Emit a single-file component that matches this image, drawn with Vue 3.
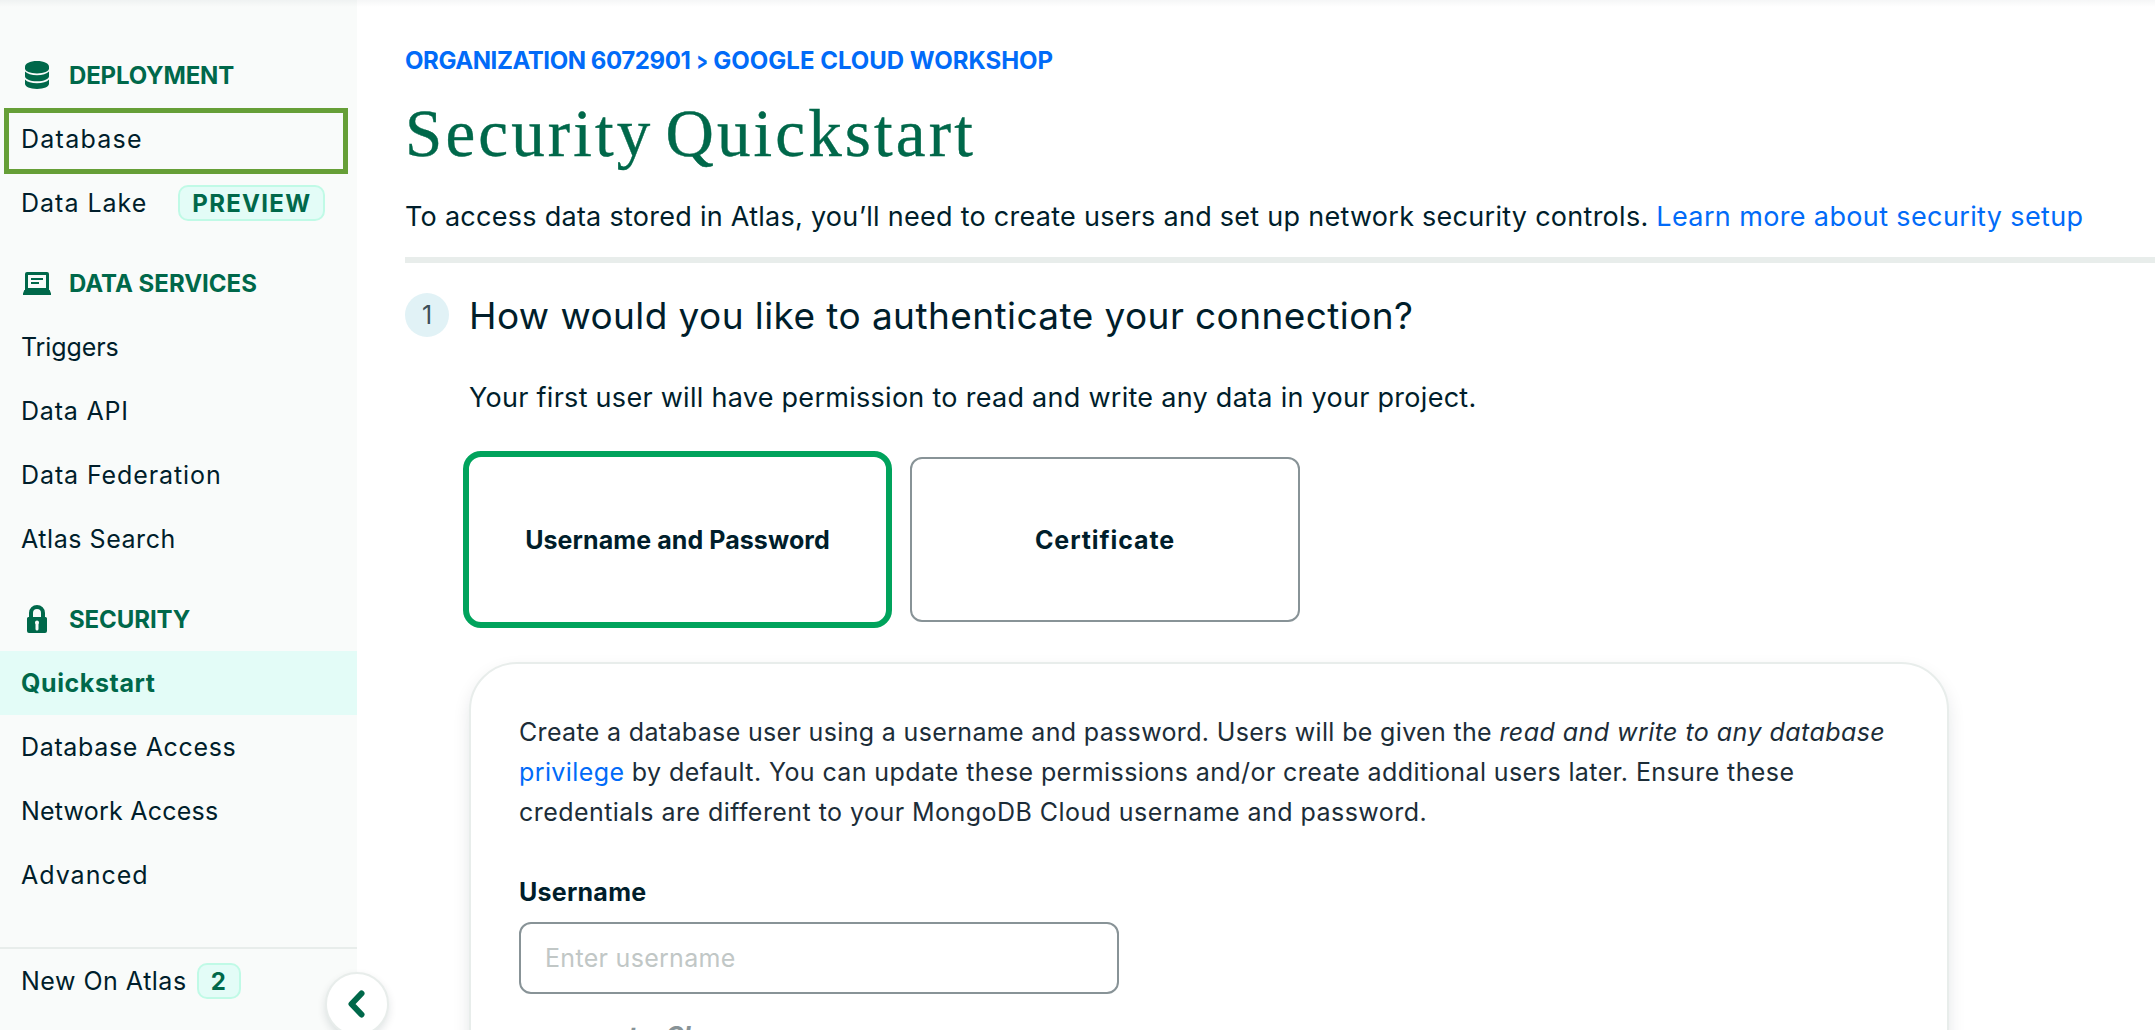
<script setup>
const deployment = [
  { label: 'Database', tracking: 1.25 },
  { label: 'Data Lake', tracking: 1.0, badge: 'PREVIEW' },
]
const services = [
  { label: 'Triggers', tracking: -0.1 },
  { label: 'Data API', tracking: 0.8 },
  { label: 'Data Federation', tracking: 0.9 },
  { label: 'Atlas Search', tracking: 0.55 },
]
const security = [
  { label: 'Quickstart', tracking: 0.6, active: true },
  { label: 'Database Access', tracking: 0.65 },
  { label: 'Network Access', tracking: 0.22 },
  { label: 'Advanced', tracking: 1.0 },
]
</script>

<template>
  <div class="page">
    <nav class="sidebar">
      <section class="group">
        <h2 class="group-title">
          <svg class="icon" width="32" height="32" viewBox="0 0 32 32">
            <path d="M4 7.500C4 4.600 8.800 2 16 2s12 2.600 12 5.500v2C28 12.200 23 14.400 16 14.400S4 12.200 4 9.500z" />
            <path d="M4 12.600c2.200 2.500 6.600 3.600 12 3.600s9.800-1.100 12-3.600v4.700c0 2.900-5 5-12 5s-12-2.100-12-5z" />
            <path d="M4 20.600c2.200 2.600 6.600 3.700 12 3.700s9.800-1.100 12-3.700v4.200c0 3-5 5.200-12 5.200S4 27.800 4 24.800z" />
          </svg>
          <span class="t-deploy">DEPLOYMENT</span>
        </h2>
        <a v-for="item in deployment" :key="item.label" class="item">
          <span :style="{ letterSpacing: item.tracking + 'px' }">{{ item.label }}</span>
          <span v-if="item.badge" class="badge preview">{{ item.badge }}</span>
        </a>
      </section>
      <section class="group">
        <h2 class="group-title">
          <svg class="icon" width="32" height="32" viewBox="0 0 32 32">
            <path fill-rule="evenodd" d="M4 7a2 2 0 0 1 2-2h20a2 2 0 0 1 2 2v16h.7l1.300 3.500V28H2v-1.500L3.300 23H4zM7 8v13h18V8z" />
            <path d="M10 11h12v2H10zM10 15h8v2h-8z" />
          </svg>
          <span>DATA SERVICES</span>
        </h2>
        <a v-for="item in services" :key="item.label" class="item">
          <span :style="{ letterSpacing: item.tracking + 'px' }">{{ item.label }}</span>
        </a>
      </section>
      <section class="group">
        <h2 class="group-title">
          <svg class="icon" width="32" height="32" viewBox="0 0 32 32">
            <path fill-rule="evenodd" d="M8 14v-4a8 8 0 0 1 16 0v4h.500A1.500 1.500 0 0 1 26 15.500V28a2 2 0 0 1-2 2H8a2 2 0 0 1-2-2V15.500A1.500 1.500 0 0 1 7.500 14zM12 14h8v-4a4 4 0 0 0-8 0zM14 19.500c0 1 .5 1.500.5 2V26a1.500 1.500 0 0 0 3 0v-4.500c0-.5.5-1 .5-2a2 2 0 0 0-4 0z" />
          </svg>
          <span class="t-sec">SECURITY</span>
        </h2>
        <a v-for="item in security" :key="item.label" class="item" :class="{ active: item.active }">
          <span :style="{ letterSpacing: item.tracking + 'px' }">{{ item.label }}</span>
        </a>
      </section>
      <footer class="news">
        <span>New On Atlas</span>
        <span class="badge count">2</span>
      </footer>
      <div class="highlight"></div>
      <button class="collapse" aria-label="Collapse">
        <svg width="32" height="32" viewBox="0 0 32 32"><path d="M20.500 5.500 10.500 16l10 10.500" /></svg>
      </button>
    </nav>

    <main class="main">
      <div class="crumbs">
        <span class="org">ORGANIZATION 6072901</span>
        <span class="sep">&gt;</span>
        <span>GOOGLE CLOUD WORKSHOP</span>
      </div>
      <h1>Security Quickstart</h1>
      <p class="intro"><span>To access data stored in Atlas, you’ll need to create users and set up network security controls.</span> <a>Learn more about security setup</a></p>
      <hr />
      <div class="step">
        <span class="num">1</span>
        <h3>How would you like to authenticate your connection?</h3>
      </div>
      <div class="body">
        <p class="lead">Your first user will have permission to read and write any data in your project.</p>
        <div class="cards">
          <div class="card selected">Username and Password</div>
          <div class="card cert">Certificate</div>
        </div>
        <div class="panel">
          <p class="desc">
            <span class="l1">Create a database user using a username and password. Users will be given the <em>read and write to any database</em></span><br />
            <span class="l2"><a>privilege</a> by default. You can update these permissions and/or create additional users later. Ensure these</span><br />
            <span>credentials are different to your MongoDB Cloud username and password.</span>
          </p>
          <label for="user">Username</label>
          <input id="user" type="text" placeholder="Enter username" />
          <div class="hint"><span>t</span><span>Cl</span></div>
        </div>
      </div>
    </main>
    <div class="top-shade"></div>
  </div>
</template>

<style>
body { margin: 0; overflow: hidden; }
</style>

<style scoped>
.page {
  position: relative;
  display: flex;
  width: 2155px;
  height: 1030px;
  overflow: hidden;
  background: #fff;
  color: #001e2b;
  font-family: Inter, "Liberation Sans", sans-serif;
  font-size: 25px;
  white-space: nowrap;
}
h1, h2, h3, p { margin: 0; font-weight: 400; }
a { color: #016bf8; }
.top-shade {
  position: absolute;
  z-index: 2;
  inset: 0 0 auto 0;
  height: 7px;
  background: linear-gradient(rgba(0, 30, 43, 0.04), rgba(0, 30, 43, 0));
}

.sidebar {
  position: relative;
  z-index: 1;
  display: flex;
  flex: 0 0 357px;
  flex-direction: column;
  box-sizing: border-box;
  padding-top: 43px;
  background: #f9fbfa;
}
.group { margin-bottom: 16px; }
.group-title {
  display: flex;
  align-items: center;
  height: 64px;
  padding-left: 21px;
  color: #00684a;
  font-size: 24px;
  font-weight: 700;
}
.icon { margin-right: 16px; fill: currentColor; }
.t-deploy { letter-spacing: -0.15px; }
.t-sec { letter-spacing: -0.1px; }
.item {
  display: flex;
  align-items: center;
  height: 64px;
  padding-left: 21px;
  color: #001e2b;
}
.item.active { background: #e3fcf7; color: #00684a; font-weight: 700; }
.badge {
  display: flex;
  align-items: center;
  justify-content: center;
  box-sizing: border-box;
  height: 36px;
  border: 2px solid #c0fae6;
  border-radius: 10px;
  background: #e3fcf7;
  color: #00684a;
  font-size: 24px;
  font-weight: 700;
}
.preview { width: 147px; margin-left: 31px; letter-spacing: 1.3px; }
.count { width: 44px; margin-left: 10px; }
.news {
  display: flex;
  align-items: center;
  height: 64px;
  margin-top: 24px;
  padding-left: 21px;
  border-top: 2px solid #e8edeb;
  letter-spacing: 0.5px;
}
.highlight {
  position: absolute;
  top: 108px;
  left: 4px;
  width: 334px;
  height: 56px;
  border: 5px solid #669f37;
}
.collapse {
  position: absolute;
  top: 972px;
  left: 325px;
  display: flex;
  align-items: center;
  justify-content: center;
  width: 64px;
  height: 64px;
  padding: 0;
  border: 2px solid #e8edeb;
  border-radius: 50%;
  background: #fff;
  box-shadow: 0 4px 8px rgba(0, 30, 43, 0.12);
}
.collapse svg { fill: none; stroke: #00684a; stroke-width: 6; stroke-linecap: round; stroke-linejoin: round; }

.main { flex: 1; padding: 41px 0 0 48px; }
.crumbs { display: flex; height: 40px; line-height: 40px; color: #016bf8; font-size: 24px; font-weight: 700; }
.org { letter-spacing: -0.43px; }
.sep { width: 16px; margin: 0 3px 0 4px; text-align: center; transform: scaleX(0.7); }
h1 {
  height: 96px;
  padding-top: 9px;
  box-sizing: border-box;
  color: #00684a;
  font: 400 67px/86px "Liberation Serif", serif;
  letter-spacing: 3.15px;
  word-spacing: -8px;
  -webkit-text-stroke: 0.4px #00684a;
}
.intro { height: 80px; line-height: 80px; font-size: 27px; letter-spacing: 0.27px; }
.intro a { letter-spacing: 0.37px; }
hr { height: 6px; margin: 0; border: 0; background: #e8edeb; }
.step { display: flex; align-items: center; gap: 20px; height: 105px; }
.num {
  width: 44px;
  height: 44px;
  margin-top: -1px;
  border-radius: 50%;
  background: #e1f2f6;
  color: #3d4f58;
  font-size: 25px;
  line-height: 44px;
  text-align: center;
}
h3 { font-size: 37px; letter-spacing: 0.42px; }
.body { padding-left: 64px; }
.lead { height: 60px; line-height: 60px; font-size: 27px; letter-spacing: 0.28px; }
.cards { display: flex; align-items: center; gap: 18px; margin: 23px 0 0 -6px; }
.card {
  display: flex;
  align-items: center;
  justify-content: center;
  box-sizing: border-box;
  width: 390px;
  height: 165px;
  border: 2px solid #889397;
  border-radius: 12px;
  font-weight: 700;
}
.card.selected { width: 429px; height: 177px; border: 6px solid #00a35c; border-radius: 18px; letter-spacing: 0.08px; }
.cert { letter-spacing: 0.9px; }
.panel {
  box-sizing: border-box;
  width: 1480px;
  height: 500px;
  margin-top: 34px;
  padding: 48px;
  border: 2px solid #e8edeb;
  border-radius: 48px;
  background: #fff;
  box-shadow: 0 8px 20px -4px rgba(0, 30, 43, 0.16);
}
.desc { color: #1c2d38; line-height: 40px; letter-spacing: 0.45px; }
.l1 { letter-spacing: 0.34px; }
.l2 { letter-spacing: 0.4px; }
em { letter-spacing: 0.45px; }
label { display: block; height: 40px; margin-top: 40px; line-height: 40px; font-weight: 700; letter-spacing: 0.25px; }
input {
  display: block;
  box-sizing: border-box;
  width: 600px;
  height: 72px;
  margin-top: 10px;
  padding: 0 24px;
  border: 2px solid #889397;
  border-radius: 12px;
  background: #fff;
  font: 400 25px Inter, sans-serif;
  letter-spacing: 0.3px;
}
input::placeholder { color: #c1c7c6; }
.hint {
  display: flex;
  gap: 28px;
  margin-top: 27px;
  padding-left: 109px;
  color: #889397;
  font: italic 700 25px/30px Inter, sans-serif;
}
</style>
